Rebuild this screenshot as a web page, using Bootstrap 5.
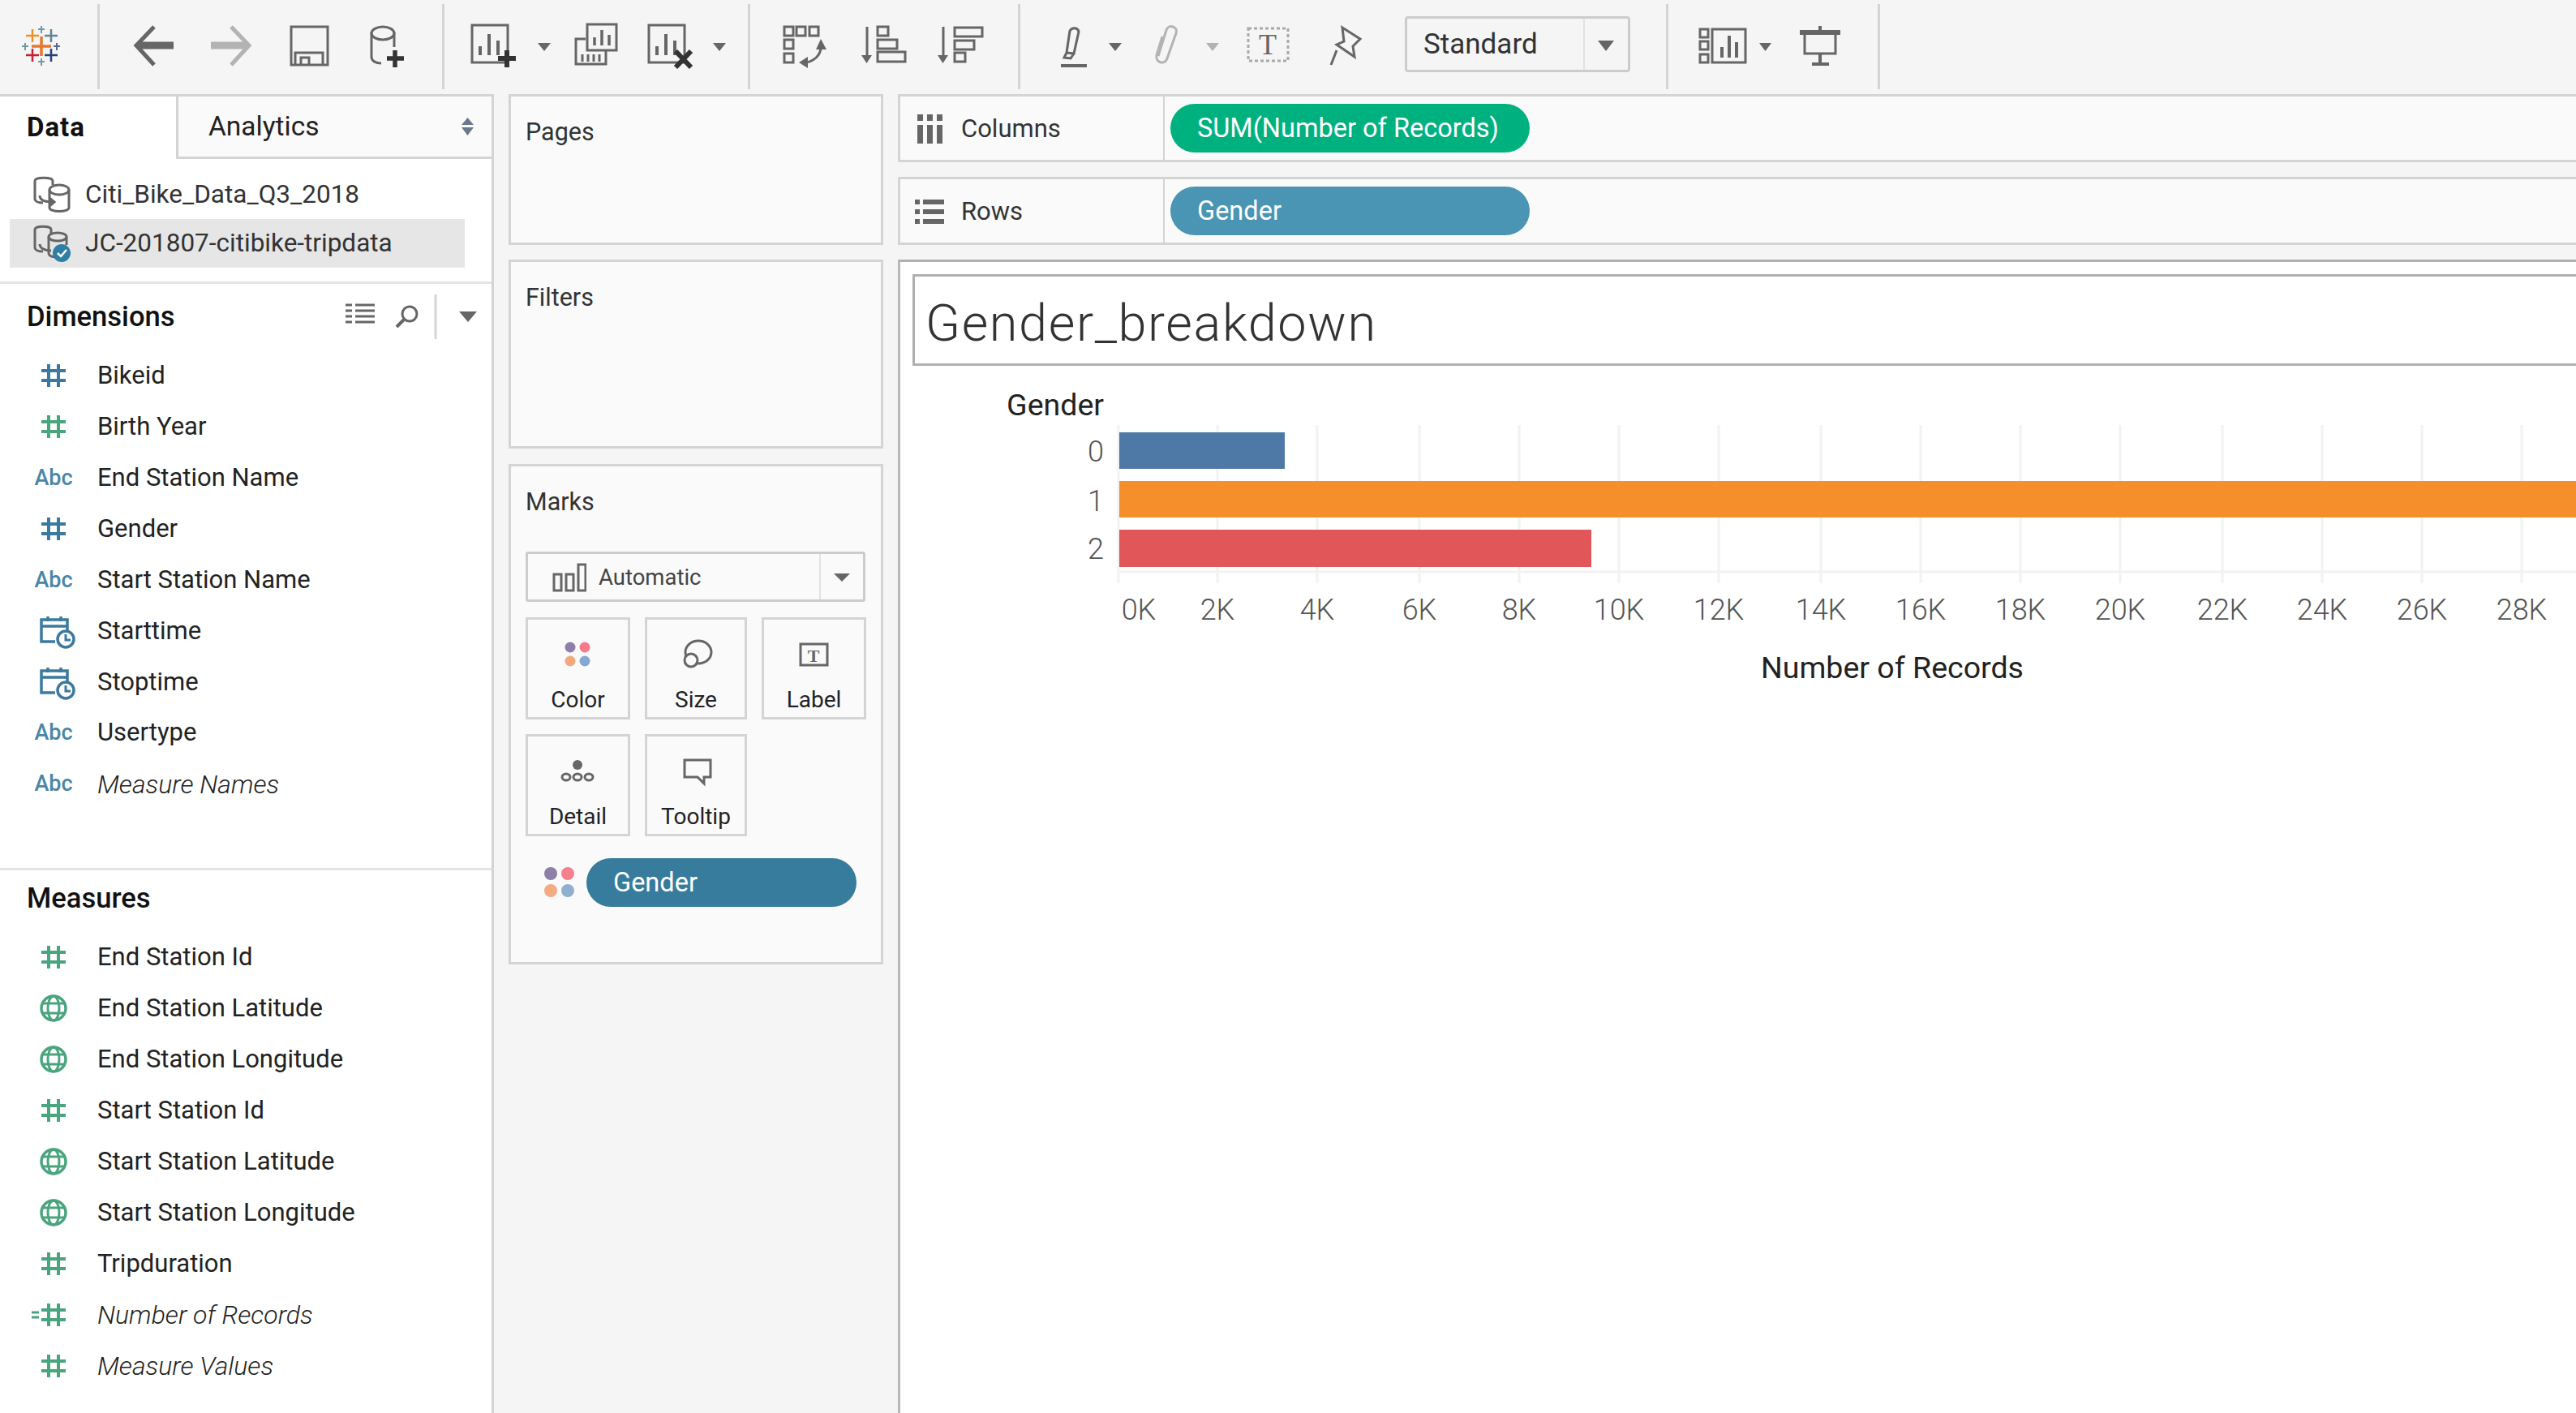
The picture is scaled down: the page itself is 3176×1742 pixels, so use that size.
<!DOCTYPE html>
<html lang="en">
<head>
  <meta charset="UTF-8">
  <title>Gender_breakdown</title>
  <link href="https://cdn.jsdelivr.net/npm/bootstrap@5.3.0/dist/css/bootstrap.min.css" rel="stylesheet">
  <style>
    html, body { height: 100%; }
    body {
      width: 3176px;
      height: 1742px;
      overflow: hidden;
      background: #f5f5f5;
      color: #222;
      font-family: Roboto, "Liberation Sans", sans-serif;
      font-size: 31px;
    }
    svg { display: block; flex: none; }

    /* toolbar */
    .tb { height: 116px; background: #f5f5f5; }
    .tb-sep { width: 3px; height: 105px; margin-top: 5px; background: #d4d4d4; flex: none; }
    .tb-line { fill: none; stroke: #666; stroke-width: 3; }
    .tb-fill { fill: #666; }
    .std-drop {
      width: 278px; height: 69px; margin-top: 20px; margin-right: 44px; flex: none;
      border: 3px solid #ccc; border-radius: 4px; font-size: 35px; color: #333;
    }
    .std-drop span { width: 219px; padding-left: 20px; border-right: 2px solid #e2e2e2; line-height: 63px; }

    /* left data pane */
    .data-pane { width: 609px; height: 1626px; background: #fff; border-right: 3px solid #d4d4d4; overflow: hidden; flex: none; border-top: 3px solid #d4d4d4; }
    .tab-data { width: 217px; height: 77px; padding-left: 33px; font-size: 33px; letter-spacing: 1px; font-weight: 700; line-height: 76px; color: #111; }
    .tab-analytics { width: 389px; height: 77px; padding-left: 37px; background: #fafafa; border-left: 3px solid #d4d4d4; border-bottom: 3px solid #d4d4d4; font-size: 33.5px; line-height: 74px; }
    .sort-ico { margin-right: 20px; }
    .ds-list { height: 154px; padding: 14px 33px 0 12px; border-bottom: 3px solid #e4e4e4; }
    .ds-row { height: 60px; width: 561px; padding-left: 29px; gap: 18px; color: #333; font-size: 31.5px; }
    .ds-row.on { background: #e6e6e6; }
    .pane-head { height: 80px; padding: 2px 17px 0 33px; font-size: 34.6px; font-weight: 500; color: #111; }
    .pane-head.meas { height: 69.6px; padding: 0 17px 4px 33px; border-top: 3px solid #e4e4e4; margin-top: 74.4px; box-sizing: content-box; }
    .fld { height: 62.9px; padding: 4px 0 0 36px; color: #222; }
    .fld i { font-style: italic; font-weight: 300; font-size: 32px; }
    .fld-ico { width: 60px; margin-right: 24px; flex: none; }
    .abc { text-align: center; font-size: 27px; font-weight: 500; color: #4b86a6; }
    .c-blue { color: #3b7a9e; }
    .c-green { color: #4aa57e; }

    /* shelves column */
    .cards-col { width: 498px; height: 1626px; padding: 0 18px; flex: none; }
    .shelf-box { background: #fafafa; border: 3px solid #d4d4d4; padding: 21px 18px; font-size: 30.5px; color: #333; width: 462px; }
    .pages-box { height: 186px; }
    .filters-box { height: 233px; margin-top: 18px; }
    .marks-box { height: 617px; margin-top: 19px; }
    .mark-type { height: 62px; width: 419px; margin-top: 38px; border: 3px solid #ccc; border-radius: 3px; color: #444; font-size: 27.5px; }
    .mark-type span { width: 362px; gap: 15px; padding: 2px 0 0 30px; height: 56px; border-right: 2px solid #e2e2e2; }
    .mark-grid { display: grid; grid-template-columns: 129px 126px 129px; gap: 18px; margin-top: 19px; }
    .mark-btn { height: 126px; border: 3px solid #d4d4d4; font-size: 28px; color: #222; text-align: center; }
    .mark-btn div { height: 46px; line-height: 46px; }
    .color-row { margin-top: 27px; padding-left: 23px; gap: 15px; }
    .pill { border-radius: 31px; color: #fff; font-size: 32.5px; font-weight: 400; height: 60px; line-height: 61px; }
    .pill-mark { width: 333px; background: #377c9c; padding-left: 33px; }

    /* right side */
    .view-col { height: 1626px; width: 2069px; }
    .top-shelf { height: 84px; background: #fafafa; border-top: 3px solid #d4d4d4; border-bottom: 3px solid #d4d4d4; border-left: 3px solid #d4d4d4; }
    .top-shelf + .top-shelf { margin-top: 18px; }
    .shelf-name { width: 326px; height: 78px; border-right: 2px solid #d4d4d4; padding: 2px 0 0 18px; gap: 15px; font-size: 31px; color: #333; }
    .pill-shelf { width: 443px; margin-left: 7px; padding-left: 33px; }
    .pill-green { background: #00b180; }
    .pill-blue { background: #4a94b4; }
    .viz { height: 1422px; margin-top: 18px; background: #fff; border-top: 3px solid #b0b0b0; border-left: 3px solid #b8b8b8; }
    .viz-title {
      height: 113px; margin: 15px 0 0 15px; padding-left: 13px;
      border: 3px solid #b0b0b0; border-right: 0;
      font-size: 63px; letter-spacing: 1.6px; font-weight: 300; color: #333; line-height: 116px;
    }
    .ch-head { font: 400 37.5px Roboto, sans-serif; fill: #222; }
    .ch-tick { font: 300 36px Roboto, sans-serif; fill: #555; }
  </style>
</head>
<body class="d-flex flex-column">
  <svg width="0" height="0" class="position-absolute">
    <symbol id="hash" viewBox="0 0 60 40">
      <path d="M15 14h30M15 26h30M24 6v28M36 6v28" fill="none" stroke="currentColor" stroke-width="4"/>
    </symbol>
    <symbol id="globe" viewBox="0 0 60 40">
      <circle cx="30" cy="20" r="15" fill="none" stroke="currentColor" stroke-width="3.5"/>
      <ellipse cx="30" cy="20" rx="7" ry="15" fill="none" stroke="currentColor" stroke-width="3"/>
      <path d="M16 14h28M16 26h28" fill="none" stroke="currentColor" stroke-width="3"/>
    </symbol>
    <symbol id="cal" viewBox="0 0 60 46">
      <path d="M32 36H15V9h32v15M15 17h32M23 5v6M39 5v6" fill="none" stroke="currentColor" stroke-width="3.5"/>
      <circle cx="45" cy="33" r="10" fill="#fff" stroke="currentColor" stroke-width="3.5"/>
      <path d="M45 27v7h6" fill="none" stroke="currentColor" stroke-width="3"/>
    </symbol>
  </svg>

  <!-- toolbar -->
  <div class="tb d-flex">
    <svg width="120" height="116" viewBox="0 0 120 116">
      <g fill="none" stroke-width="2.500">
        <path d="M51 45v24M39 57h24" stroke="#e8762d" stroke-width="3.500"/>
        <path d="M40 36v16M32 44h16" stroke="#eb912c"/>
        <path d="M63 36v16M55 44h16" stroke="#5b879b"/>
        <path d="M40 60v16M32 68h16" stroke="#c72035"/>
        <path d="M63 60v16M55 68h16" stroke="#1f457e"/>
        <path d="M51 32v9M47 36h8M51 72v9M47 76h8" stroke="#7099a6" stroke-width="2"/>
        <path d="M31 53v9M27 57h8" stroke="#7099a6" stroke-width="2"/>
        <path d="M70 53v9M66 57h8" stroke="#5c6692" stroke-width="2"/>
      </g>
    </svg>
    <div class="tb-sep"></div>
    <svg width="117" height="116" viewBox="123 0 117 116">
      <path d="M170 56h44" stroke="#666" stroke-width="9" fill="none"/>
      <path d="M190 33l-22 23 22 24" stroke="#666" stroke-width="5" fill="none"/>
    </svg>
    <svg width="95" height="116" viewBox="240 0 95 116">
      <path d="M260 56h44" stroke="#b3b3b3" stroke-width="9" fill="none"/>
      <path d="M285 33l22 23-22 24" stroke="#b3b3b3" stroke-width="5" fill="none"/>
    </svg>
    <svg width="95" height="116" viewBox="335 0 95 116">
      <rect class="tb-line" x="359" y="33" width="45" height="47"/>
      <path class="tb-line" d="M364 79V65h34v14M371 79V71h10v8"/>
    </svg>
    <svg width="115" height="116" viewBox="430 0 115 116">
      <path class="tb-line" d="M458 40V70c0 5 5 8 12 8M486 40v18"/>
      <ellipse class="tb-line" cx="472" cy="41" rx="14" ry="8"/>
      <path d="M487 62v21M477 72h21" stroke="#333" stroke-width="5.5"/>
    </svg>
    <div class="tb-sep"></div>
    <svg width="154" height="116" viewBox="548 0 154 116">
      <rect class="tb-line" x="582" y="31" width="44" height="46"/>
      <path d="M592 68V57M603 68V42M614 68V50" stroke="#666" stroke-width="4"/>
      <path d="M625 62v21M614 72h22" stroke="#333" stroke-width="6"/>
      <path class="tb-fill" d="M663 53h16l-8 10z"/>
    </svg>
    <svg width="90" height="116" viewBox="702 0 90 116">
      <rect class="tb-line" x="724" y="30" width="36" height="32"/>
      <path d="M733 56V46M742 56V37M751 56V43" stroke="#666" stroke-width="3.5"/>
      <path class="tb-line" d="M722 48H710V79H747V63"/>
      <path d="M718 76V67M725 76V67M732 76V67M739 76V67" stroke="#666" stroke-width="3"/>
    </svg>
    <svg width="130" height="116" viewBox="792 0 130 116">
      <rect class="tb-line" x="800" y="31" width="44" height="46"/>
      <path d="M810 68V57M821 68V42M832 68V50" stroke="#666" stroke-width="4"/>
      <path d="M833 63l19 20M852 63l-19 20" stroke="#333" stroke-width="6"/>
      <path class="tb-fill" d="M879 53h16l-8 10z"/>
    </svg>
    <div class="tb-sep"></div>
    <svg width="113" height="116" viewBox="925 0 113 116">
      <g class="tb-line"><rect x="967" y="33" width="11" height="11"/><rect x="982" y="33" width="11" height="11"/><rect x="998" y="33" width="11" height="11"/><rect x="967" y="49" width="11" height="11"/><rect x="967" y="66" width="11" height="11"/></g>
      <path class="tb-line" d="M1012 58c0 10-8 18-22 20"/>
      <path class="tb-fill" d="M1012 48l7 13h-13zM985 77l11-7v14z"/>
    </svg>
    <svg width="100" height="116" viewBox="1038 0 100 116">
      <path class="tb-line" d="M1069 33v36"/>
      <path class="tb-fill" d="M1062 68h13l-6.500 10z"/>
      <g class="tb-line"><rect x="1082" y="33" width="13" height="11"/><rect x="1082" y="49" width="24" height="11"/><rect x="1082" y="64" width="34" height="12"/></g>
    </svg>
    <svg width="117" height="116" viewBox="1138 0 117 116">
      <path class="tb-line" d="M1163 33v36"/>
      <path class="tb-fill" d="M1156 68h13l-6.500 10z"/>
      <g class="tb-line"><rect x="1177" y="34" width="34" height="11"/><rect x="1177" y="50" width="24" height="11"/><rect x="1177" y="65" width="13" height="11"/></g>
    </svg>
    <div class="tb-sep"></div>
    <svg width="140" height="116" viewBox="1258 0 140 116">
      <path class="tb-line" d="M1319 38c3-5 10-4 11 1l-6 27-9-1zM1315 65l-3 6 8 1 4-6"/>
      <path class="tb-fill" d="M1308 79h32v4h-32z"/>
      <path class="tb-fill" d="M1367 53h16l-8 10z"/>
    </svg>
    <svg width="125" height="116" viewBox="1398 0 125 116">
      <path d="M1433 45l-7 23c-2 9 10 13 13 4l11-31c3-8-9-12-12-4l-10 32" fill="none" stroke="#b3b3b3" stroke-width="3"/>
      <path d="M1487 53h16l-8 10z" fill="#b3b3b3"/>
    </svg>
    <svg width="98" height="116" viewBox="1523 0 98 116">
      <rect x="1539" y="35" width="49" height="40" fill="none" stroke="#aaa" stroke-width="3" stroke-dasharray="4 3"/>
      <text x="1563" y="67" text-anchor="middle" font-family="'Liberation Serif', serif" font-size="36" fill="#666">T</text>
    </svg>
    <svg width="111" height="116" viewBox="1621 0 111 116">
      <path class="tb-line" d="M1655 34l22 14-9 9 2 13-22-15 9-4zM1648 62l-7 18"/>
    </svg>
    <div class="std-drop d-flex align-items-center">
      <span class="d-block">Standard</span>
      <svg width="53" height="63" viewBox="0 0 53 63"><path class="tb-fill" d="M16 27h20l-10 13z"/></svg>
    </div>
    <div class="tb-sep"></div>
    <svg width="139" height="116" viewBox="2057 0 139 116">
      <g class="tb-line"><rect x="2096" y="36" width="10" height="10"/><rect x="2096" y="51" width="10" height="10"/><rect x="2096" y="67" width="10" height="10"/><rect x="2111" y="36" width="41" height="41"/></g>
      <path d="M2123 71V58M2132 71V44M2141 71V52" stroke="#666" stroke-width="4"/>
      <path class="tb-fill" d="M2169 53h15l-7.500 10z"/>
    </svg>
    <svg width="119" height="116" viewBox="2196 0 119 116">
      <path class="tb-fill" d="M2219 37h50v6h-50zM2242 32h4v6h-4zM2242 66h4v13h-4zM2234 77h21v4h-21z"/>
      <path class="tb-line" d="M2225 43v23h38V43"/>
    </svg>
    <div class="tb-sep"></div>
  </div>

  <div class="d-flex">
    <!-- data pane -->
    <div class="data-pane">
      <div class="d-flex">
        <div class="tab-data">Data</div>
        <div class="tab-analytics d-flex justify-content-between align-items-center">
          <span>Analytics</span>
          <svg class="sort-ico" width="20" height="24" viewBox="0 0 20 24"><path d="M3 10h15l-7.500-9zM3 13h15l-7.500 10z" fill="#6a7a8c"/></svg>
        </div>
      </div>
      <div class="ds-list">
        <div class="ds-row d-flex align-items-center">
          <svg width="46" height="46" viewBox="0 0 46 46">
            <path class="tb-line" d="M2 6c0-5 22-5 22 0M2 6v22c0 3 4 5 10 5M24 6v5"/>
            <ellipse class="tb-line" cx="32" cy="17" rx="12" ry="6"/>
            <path class="tb-line" d="M20 17v22c0 6 24 6 24 0V17M8 24c0 6 6 8 16 8M20 27l6 5-6 5"/>
          </svg>
          <span>Citi_Bike_Data_Q3_2018</span>
        </div>
        <div class="ds-row on d-flex align-items-center">
          <svg width="46" height="46" viewBox="0 0 46 46">
            <path class="tb-line" d="M2 6c0-5 20-5 20 0M2 6v22c0 3 4 5 10 5M22 6v5"/>
            <ellipse class="tb-line" cx="30" cy="15" rx="11" ry="5"/>
            <path class="tb-line" d="M19 15v20c0 5 10 6 14 4M41 15v10M8 24c0 5 6 8 14 8"/>
            <circle cx="35" cy="35" r="11" fill="#2f7ea3"/>
            <path d="M30 35l4 4 7-8" fill="none" stroke="#fff" stroke-width="2.500"/>
          </svg>
          <span>JC-201807-citibike-tripdata</span>
        </div>
      </div>
      <div class="pane-head d-flex align-items-center">
        <span class="flex-grow-1">Dimensions</span>
        <svg width="135" height="56" viewBox="426 362 135 56">
          <path d="M426 375h8M438 375h24M426 382h8M438 382h24M426 389h8M438 389h24M426 396h8M438 396h24" stroke="#666" stroke-width="3" fill="none"/>
          <circle class="tb-line" cx="505" cy="386" r="9"/>
          <path d="M498 393l-9 9" stroke="#666" stroke-width="4"/>
          <path d="M537 362v55" stroke="#d4d4d4" stroke-width="3"/>
        </svg>
        <svg width="24" height="16" class="ms-1" viewBox="0 0 24 16"><path class="tb-fill" d="M1 1h22l-11 13z"/></svg>
      </div>
      <div class="fld d-flex align-items-center"><svg class="fld-ico c-blue" height="40"><use href="#hash"/></svg>Bikeid</div>
      <div class="fld d-flex align-items-center"><svg class="fld-ico c-green" height="40"><use href="#hash"/></svg>Birth Year</div>
      <div class="fld d-flex align-items-center"><span class="fld-ico abc">Abc</span>End Station Name</div>
      <div class="fld d-flex align-items-center"><svg class="fld-ico c-blue" height="40"><use href="#hash"/></svg>Gender</div>
      <div class="fld d-flex align-items-center"><span class="fld-ico abc">Abc</span>Start Station Name</div>
      <div class="fld d-flex align-items-center"><svg class="fld-ico c-blue" height="46"><use href="#cal"/></svg>Starttime</div>
      <div class="fld d-flex align-items-center"><svg class="fld-ico c-blue" height="46"><use href="#cal"/></svg>Stoptime</div>
      <div class="fld d-flex align-items-center"><span class="fld-ico abc">Abc</span>Usertype</div>
      <div class="fld d-flex align-items-center"><span class="fld-ico abc">Abc</span><i>Measure Names</i></div>

      <div class="pane-head meas d-flex align-items-center">Measures</div>
      <div class="fld d-flex align-items-center"><svg class="fld-ico c-green" height="40"><use href="#hash"/></svg>End Station Id</div>
      <div class="fld d-flex align-items-center"><svg class="fld-ico c-green" height="40"><use href="#globe"/></svg>End Station Latitude</div>
      <div class="fld d-flex align-items-center"><svg class="fld-ico c-green" height="40"><use href="#globe"/></svg>End Station Longitude</div>
      <div class="fld d-flex align-items-center"><svg class="fld-ico c-green" height="40"><use href="#hash"/></svg>Start Station Id</div>
      <div class="fld d-flex align-items-center"><svg class="fld-ico c-green" height="40"><use href="#globe"/></svg>Start Station Latitude</div>
      <div class="fld d-flex align-items-center"><svg class="fld-ico c-green" height="40"><use href="#globe"/></svg>Start Station Longitude</div>
      <div class="fld d-flex align-items-center"><svg class="fld-ico c-green" height="40"><use href="#hash"/></svg>Tripduration</div>
      <div class="fld d-flex align-items-center">
        <svg class="fld-ico c-green" height="40" viewBox="0 0 60 40"><path d="M3 17h9M3 23h9" stroke="currentColor" stroke-width="3"/><use href="#hash" width="60" height="40"/></svg>
        <i>Number of Records</i>
      </div>
      <div class="fld d-flex align-items-center"><svg class="fld-ico c-green" height="40"><use href="#hash"/></svg><i>Measure Values</i></div>
    </div>

    <!-- pages, filters, marks -->
    <div class="cards-col">
      <div class="shelf-box pages-box">Pages</div>
      <div class="shelf-box filters-box">Filters</div>
      <div class="shelf-box marks-box">
        <div>Marks</div>
        <div class="mark-type d-flex align-items-center">
          <span class="d-flex align-items-center">
            <svg width="42" height="36" viewBox="0 0 42 36"><path class="tb-line" d="M2 14h9v20H2zM17 14h9v20h-9zM32 2h9v32h-9z"/></svg>
            Automatic
          </span>
          <svg width="52" height="56" viewBox="0 0 52 56"><path class="tb-fill" d="M16 24h20l-10 10z"/></svg>
        </div>
        <div class="mark-grid">
          <div class="mark-btn">
            <svg width="123" height="76" viewBox="651 764 123 76">
              <circle cx="703" cy="798" r="6.500" fill="#8e7fa8"/><circle cx="721" cy="798" r="6.500" fill="#f77a8a"/>
              <circle cx="703" cy="815" r="6.500" fill="#f2a97e"/><circle cx="721" cy="815" r="6.500" fill="#86a9d0"/>
            </svg>
            <div>Color</div>
          </div>
          <div class="mark-btn">
            <svg width="120" height="76" viewBox="798 764 120 76">
              <ellipse class="tb-line" cx="861" cy="804" rx="16" ry="14"/>
              <circle cx="852" cy="814" r="8" fill="#fafafa" stroke="#666" stroke-width="3"/>
            </svg>
            <div>Size</div>
          </div>
          <div class="mark-btn">
            <svg width="123" height="76" viewBox="942 764 123 76">
              <rect class="tb-line" x="987" y="794" width="33" height="26"/>
              <text x="1003" y="816" text-anchor="middle" font-family="'Liberation Serif', serif" font-weight="700" font-size="22" fill="#666">T</text>
            </svg>
            <div>Label</div>
          </div>
          <div class="mark-btn">
            <svg width="123" height="76" viewBox="651 908 123 76">
              <circle cx="712" cy="943" r="6" fill="#666"/>
              <g class="tb-line"><ellipse cx="698" cy="958" rx="5" ry="4"/><ellipse cx="712" cy="958" rx="5" ry="4"/><ellipse cx="726" cy="958" rx="5" ry="4"/></g>
            </svg>
            <div>Detail</div>
          </div>
          <div class="mark-btn">
            <svg width="120" height="76" viewBox="798 908 120 76">
              <path class="tb-line" d="M844 937h32v21h-8v8l-8-8h-16z"/>
            </svg>
            <div>Tooltip</div>
          </div>
        </div>
        <div class="color-row d-flex align-items-center">
          <svg width="37" height="37" viewBox="0 0 37 37">
            <circle cx="8" cy="8" r="8" fill="#8e7fa8"/><circle cx="29" cy="8" r="8" fill="#f4808e"/>
            <circle cx="8" cy="29" r="8" fill="#f2ab82"/><circle cx="29" cy="29" r="8" fill="#8fb0d2"/>
          </svg>
          <div class="pill pill-mark">Gender</div>
        </div>
      </div>
    </div>

    <!-- shelves and view -->
    <div class="view-col">
      <div class="top-shelf d-flex align-items-center">
        <div class="shelf-name d-flex align-items-center">
          <svg width="42" height="36" viewBox="-3 0 42 36"><path class="tb-fill" d="M0 0h7v8H0zM12 0h7v8h-7zM24 0h7v8h-7zM0 13h7v23H0zM12 13h7v23h-7zM24 13h7v23h-7z"/></svg>
          Columns
        </div>
        <div class="pill pill-shelf pill-green">SUM(Number of Records)</div>
      </div>
      <div class="top-shelf d-flex align-items-center">
        <div class="shelf-name d-flex align-items-center">
          <svg width="42" height="30" viewBox="0 0 42 30"><path class="tb-fill" d="M0 0h6v6H0zM10 0h26v6H10zM0 12h6v6H0zM10 12h26v6H10zM0 24h6v6H0zM10 24h26v6H10z"/></svg>
          Rows
        </div>
        <div class="pill pill-shelf pill-blue">Gender</div>
      </div>
      <div class="viz">
        <div class="viz-title">Gender_breakdown</div>
        <svg width="2066" height="1288" viewBox="1110 451 2066 1288">
          <text class="ch-head" x="1361" y="512" text-anchor="end">Gender</text>
          <g stroke="#f2f2f2" stroke-width="3">
            <path d="M1379 524v195M1501 524v195M1624 524v195M1750 524v195M1873 524v195M1996 524v195M2119 524v195M2245 524v195M2368 524v195M2491 524v195M2614 524v195M2740 524v195M2863 524v195M2986 524v195M3109 524v195"/>
            <path d="M1379 705H3176"/>
          </g>
          <rect x="1380" y="533" width="204" height="45" fill="#4e79a7"/>
          <rect x="1380" y="593" width="1796" height="45" fill="#f48f2c"/>
          <rect x="1380" y="653" width="582" height="46" fill="#e15759"/>
          <g text-anchor="end">
            <text class="ch-tick" x="1361" y="569">0</text>
            <text class="ch-tick" x="1361" y="630">1</text>
            <text class="ch-tick" x="1361" y="689">2</text>
          </g>
          <g text-anchor="middle">
            <text class="ch-tick" x="1404" y="764">0K</text>
            <text class="ch-tick" x="1501" y="764">2K</text>
            <text class="ch-tick" x="1624" y="764">4K</text>
            <text class="ch-tick" x="1750" y="764">6K</text>
            <text class="ch-tick" x="1873" y="764">8K</text>
            <text class="ch-tick" x="1996" y="764">10K</text>
            <text class="ch-tick" x="2119" y="764">12K</text>
            <text class="ch-tick" x="2245" y="764">14K</text>
            <text class="ch-tick" x="2368" y="764">16K</text>
            <text class="ch-tick" x="2491" y="764">18K</text>
            <text class="ch-tick" x="2614" y="764">20K</text>
            <text class="ch-tick" x="2740" y="764">22K</text>
            <text class="ch-tick" x="2863" y="764">24K</text>
            <text class="ch-tick" x="2986" y="764">26K</text>
            <text class="ch-tick" x="3109" y="764">28K</text>
            <text class="ch-head" x="2333" y="836">Number of Records</text>
          </g>
        </svg>
      </div>
    </div>
  </div>

  <script src="https://cdn.jsdelivr.net/npm/bootstrap@5.3.0/dist/js/bootstrap.bundle.min.js"></script>
</body>
</html>
